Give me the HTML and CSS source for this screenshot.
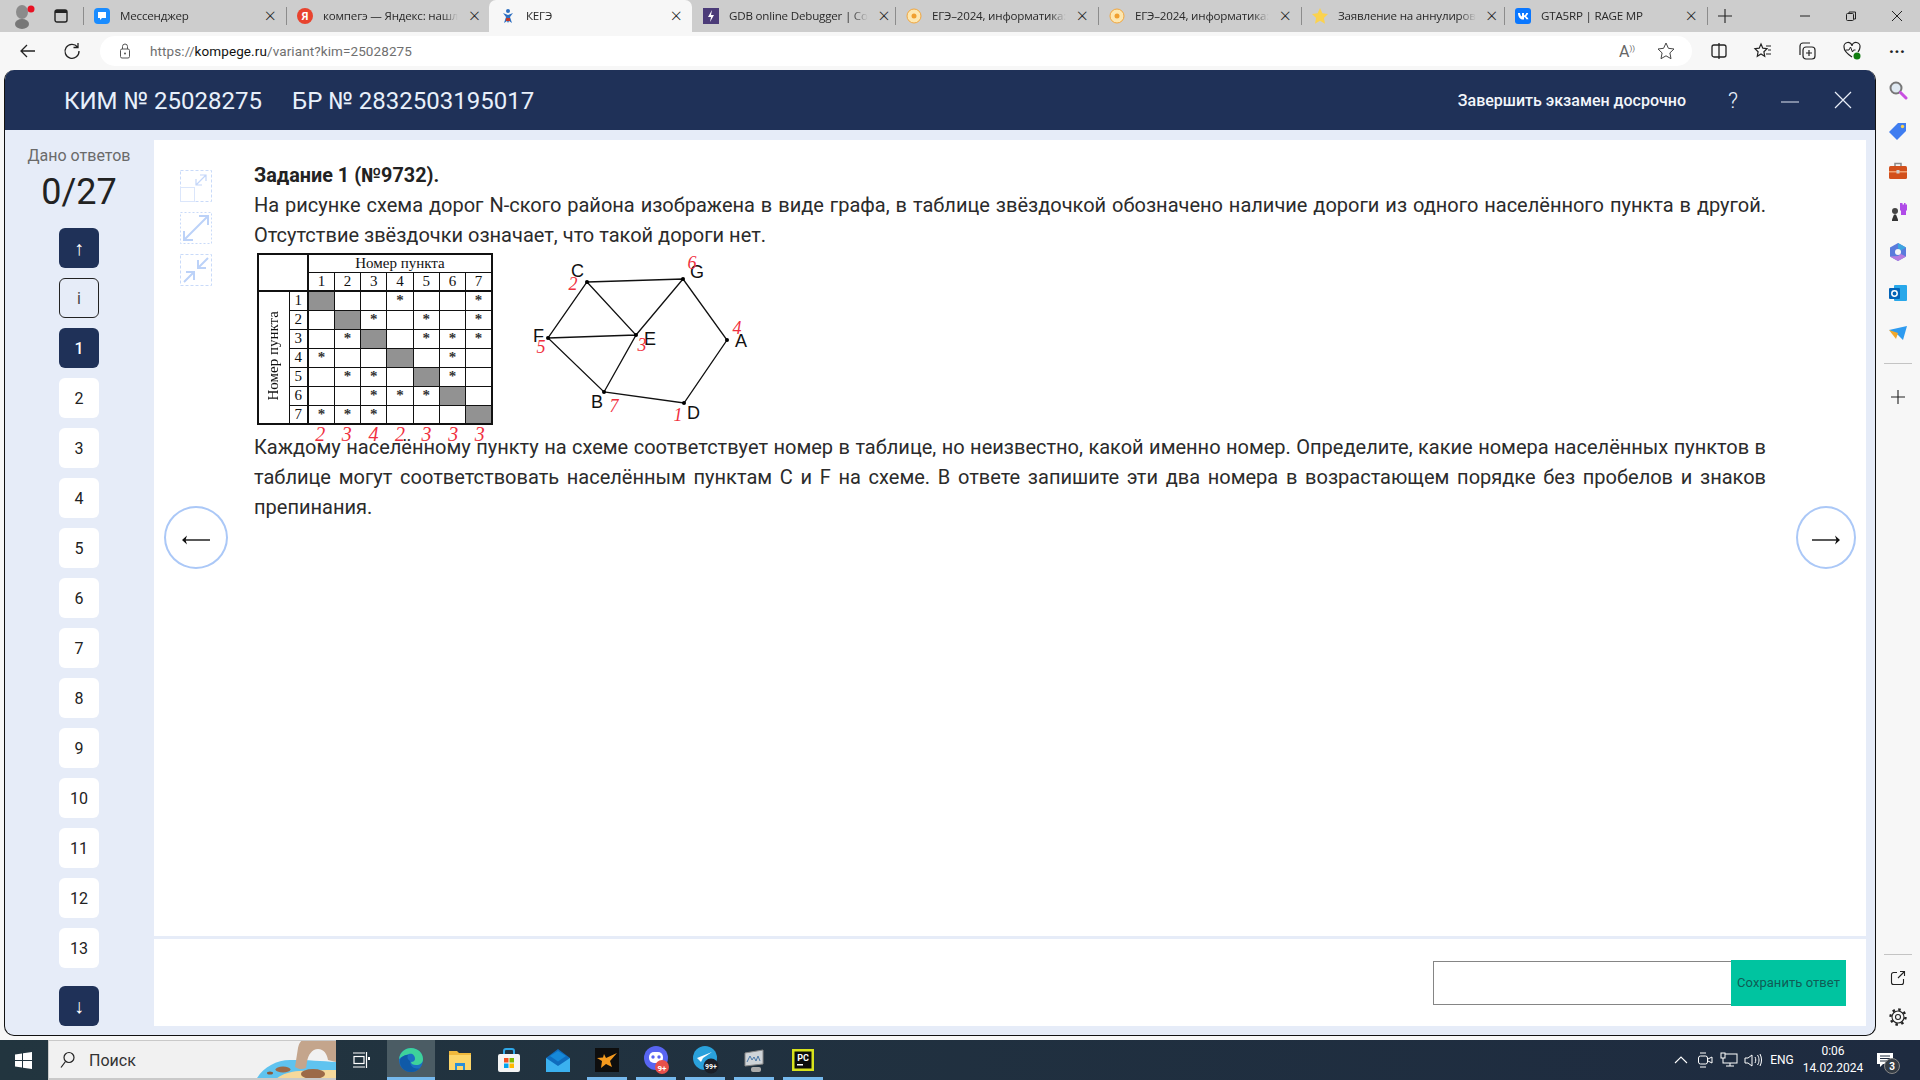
FILE: index.html
```html
<!DOCTYPE html>
<html lang="ru">
<head>
<meta charset="utf-8">
<title>КЕГЭ</title>
<link rel="stylesheet" href="styles.css">
</head>
<body>
<div class="tabbar">
  <div class="tb-left">
    <svg width="24" height="26" viewBox="0 0 24 26"><ellipse cx="10" cy="9" rx="6" ry="7" fill="#8b8b8b"/><ellipse cx="10" cy="21" rx="7" ry="5" fill="#777"/><circle cx="19" cy="6" r="3.500" fill="#e81123"/></svg>
    <svg class="ws" width="14" height="14" viewBox="0 0 14 14"><rect x="1" y="1" width="12" height="12" rx="2" fill="none" stroke="#222" stroke-width="1.400"/><rect x="1" y="1" width="12" height="3" fill="#222"/></svg>
  </div>
  <div class="tab sep"><svg class="fav" viewBox="0 0 16 16"><rect width="16" height="16" rx="4" fill="#1a8cff"/><path d="M4 4h8v6H8l-2 2v-2H4z" fill="#fff"/></svg><span class="tt">Мессенджер</span><span class="tx">×</span></div>
  <div class="tab sep"><svg class="fav" viewBox="0 0 16 16"><circle cx="8" cy="8" r="8" fill="#e8432e"/><text x="8" y="12" class="favt">Я</text></svg><span class="tt">компегэ — Яндекс: нашл</span><span class="tx">×</span></div>
  <div class="tab active"><svg class="fav" viewBox="0 0 16 16"><circle cx="8" cy="3" r="2" fill="#2d6fc0"/><path d="M3 5l5 2 5-2-3 4 2 6-3-2-1 2-1-2-3 2 2-6z" fill="#2d6fc0"/><path d="M6 10h4v3H6z" fill="#c0392b"/></svg><span class="tt">КЕГЭ</span><span class="tx">×</span></div>
  <div class="tab"><svg class="fav" viewBox="0 0 16 16"><rect width="16" height="16" fill="#4b3b78"/><path d="M9 2L5 9h3l-1 5 4-7H8z" fill="#fff"/></svg><span class="tt">GDB online Debugger | Co</span><span class="tx">×</span></div>
  <div class="tab sep"><svg class="fav" viewBox="0 0 16 16"><circle cx="8" cy="8" r="7" fill="#fde7b0" stroke="#f0a640"/><circle cx="8" cy="8" r="2.500" fill="#f0a030"/></svg><span class="tt">ЕГЭ–2024, информатика:</span><span class="tx">×</span></div>
  <div class="tab sep"><svg class="fav" viewBox="0 0 16 16"><circle cx="8" cy="8" r="7" fill="#fde7b0" stroke="#f0a640"/><circle cx="8" cy="8" r="2.500" fill="#f0a030"/></svg><span class="tt">ЕГЭ–2024, информатика:</span><span class="tx">×</span></div>
  <div class="tab sep"><svg class="fav" viewBox="0 0 16 16"><path d="M8 0l2.400 5.300 5.600.7-4.100 3.900 1.100 5.800L8 12.800l-5 2.900 1.100-5.800L0 6l5.600-.7z" fill="#fbd24e"/></svg><span class="tt">Заявление на аннулиров</span><span class="tx">×</span></div>
  <div class="tab sep"><svg class="fav" viewBox="0 0 16 16"><rect width="16" height="16" rx="3" fill="#0a77ff"/><path d="M3 5h2c.2 2 1 3.200 2 3.500V5h2v2.500c1-.2 1.800-1.200 2.200-2.500h2c-.3 1.600-1.300 2.700-2.200 3.300 1 .5 2 1.500 2.500 3h-2.200c-.4-1.200-1.300-2-2.300-2.200V11.500H8C5 11.500 3.200 9 3 5z" fill="#fff"/></svg><span class="tt">GTA5RP | RAGE MP</span><span class="tx">×</span></div>
  <div class="plus sep"><svg width="16" height="16" viewBox="0 0 16 16"><path d="M8 1v14M1 8h14" stroke="#222" stroke-width="1.100"/></svg></div>
  <div class="winctl">
    <svg width="12" height="12" viewBox="0 0 12 12"><path d="M1 6h10" stroke="#222"/></svg>
    <svg width="12" height="12" viewBox="0 0 12 12"><rect x="1.500" y="3.500" width="7" height="7" rx="1" fill="none" stroke="#222"/><path d="M4 3V2h6.500v7H9" fill="none" stroke="#222"/></svg>
    <svg width="12" height="12" viewBox="0 0 12 12"><path d="M1 1l10 10M11 1L1 11" stroke="#222"/></svg>
  </div>
</div>

<div class="addrbar">
  <svg class="nav" width="20" height="20" viewBox="0 0 20 20"><path d="M17 10H3M9 4l-6 6 6 6" fill="none" stroke="#222" stroke-width="1.300"/></svg>
  <svg class="nav" width="20" height="20" viewBox="0 0 20 20"><path d="M15.500 6A7 7 0 1 0 17 10M16 2v4.500h-4.500" fill="none" stroke="#222" stroke-width="1.300"/></svg>
  <div class="urlpill">
    <svg width="14" height="16" viewBox="0 0 14 16"><rect x="2.500" y="6" width="9" height="9" rx="1.500" fill="none" stroke="#555"/><path d="M4.500 6V3.500a2.500 2.500 0 0 1 5 0V6" fill="none" stroke="#555"/><circle cx="7" cy="10.500" r="1" fill="#555"/></svg>
    <span class="url">https://<b>kompege.ru</b>/variant?kim=25028275</span>
    <span class="spacer"></span>
    <span class="aa">A<small>))</small></span>
    <svg width="20" height="20" viewBox="0 0 20 20"><path d="M10 2l2.400 5.300 5.600.7-4.100 3.900 1.100 5.800-5-2.900-5 2.900 1.100-5.800L2 8l5.600-.7z" fill="none" stroke="#444"/></svg>
  </div>
  <div class="addr-tools">
    <svg width="18" height="18" viewBox="0 0 18 18"><rect x="2" y="3" width="14" height="12" rx="2" fill="none" stroke="#222" stroke-width="1.300"/><path d="M9 1v16" stroke="#222" stroke-width="1.300"/></svg>
    <svg width="20" height="20" viewBox="0 0 20 20"><path d="M8 3l1.800 4.200 4.200.5-3.100 3 .8 4.500L8 13l-3.700 2.200.8-4.500L2 7.700l4.200-.5z" fill="none" stroke="#222" stroke-width="1.200"/><path d="M13 5h5M15 9h3M13 13h5" stroke="#222" stroke-width="1.200"/></svg>
    <svg width="20" height="20" viewBox="0 0 20 20"><rect x="6" y="6" width="12" height="12" rx="3" fill="none" stroke="#222" stroke-width="1.200"/><path d="M12 9v6M9 12h6M3 14V5a3 3 0 0 1 3-3h7" fill="none" stroke="#222" stroke-width="1.200"/></svg>
    <svg width="20" height="20" viewBox="0 0 20 20"><path d="M10 16C4 12 2 9 2 6a4 4 0 0 1 8-1 4 4 0 0 1 8 1c0 1.500-.5 3-2 5" fill="none" stroke="#222" stroke-width="1.200"/><path d="M4 9h3l1.500-3 2 5 1-2h2" fill="none" stroke="#222"/><circle cx="15" cy="15" r="3.500" fill="#107c10"/></svg>
    <span class="dots">···</span>
  </div>
</div>

<div class="middle">
  <div class="app">
    <header class="apphead">
      <div class="ids"><span>КИМ № 25028275</span><span>БР № 2832503195017</span></div>
      <div class="headright">
        <span class="finish">Завершить экзамен досрочно</span>
        <span class="hq">?</span>
        <svg width="18" height="18" viewBox="0 0 18 18"><path d="M0 11h18" stroke="#dfe6f2" stroke-width="1.200"/></svg>
        <svg width="18" height="18" viewBox="0 0 18 18"><path d="M1 1l16 16M17 1L1 17" stroke="#e8eef8" stroke-width="1.200"/></svg>
      </div>
    </header>
    <div class="appbody">
      <aside class="side">
        <div class="given">Дано ответов</div>
        <div class="count">0/27</div>
        <nav class="nums">
          <div class="nb dark arrow">↑</div>
          <div class="nb outline">i</div>
          <div class="nb dark">1</div>
          <div class="nb">2</div>
          <div class="nb">3</div>
          <div class="nb">4</div>
          <div class="nb">5</div>
          <div class="nb">6</div>
          <div class="nb">7</div>
          <div class="nb">8</div>
          <div class="nb">9</div>
          <div class="nb">10</div>
          <div class="nb">11</div>
          <div class="nb">12</div>
          <div class="nb">13</div>
          <div class="nb dark arrow down">↓</div>
        </nav>
      </aside>
      <main class="mainarea">
        <section class="task">
          <div class="tools">
            <div class="toolbtn"><svg width="32" height="32" viewBox="0 0 32 32"><rect x=".5" y=".5" width="31" height="31" fill="none" stroke="#c9daf9" stroke-dasharray="3 2"/><rect x=".5" y="17.500" width="14" height="14" fill="none" stroke="#dbe6fb"/><path d="M16 15L26 5M20 5h6v6M16 9v6h6" fill="none" stroke="#c3d6f9" stroke-width="1.200"/></svg></div>
            <div class="toolbtn"><svg width="32" height="32" viewBox="0 0 32 32"><rect x=".5" y=".5" width="31" height="31" fill="none" stroke="#c9daf9" stroke-dasharray="2 2"/><path d="M5 27L27 5M19 4h9v9M4 19v9h9" fill="none" stroke="#bcd2f8" stroke-width="2"/></svg></div>
            <div class="toolbtn"><svg width="32" height="32" viewBox="0 0 32 32"><rect x=".5" y=".5" width="31" height="31" fill="none" stroke="#c9daf9" stroke-dasharray="3 2"/><path d="M28 4L18 14M18 6v8h8M4 28l10-10M14 26v-8H6" fill="none" stroke="#bcd2f8" stroke-width="2"/></svg></div>
          </div>
          <div class="tasktext">
            <div class="title">Задание 1 (№9732).</div>
            <p class="para">На рисунке схема дорог N-ского района изображена в виде графа, в таблице звёздочкой обозначено наличие дороги из одного населённого пункта в другой. Отсутствие звёздочки означает, что такой дороги нет.</p>
            <div class="figure">
              <div class="tablewrap">
                <table class="roads">
                  <colgroup><col class="c1"><col class="c2"><col><col><col><col><col><col><col></colgroup>
                  <tr class="r1"><td class="corner" colspan="2" rowspan="2"></td><td class="th" colspan="7">Номер пункта</td></tr>
                  <tr class="r2"><td>1</td><td>2</td><td>3</td><td>4</td><td>5</td><td>6</td><td>7</td></tr>
                  <tr><td class="vert" rowspan="7"><span>Номер пункта</span></td><td class="rn">1</td><td class="g"></td><td></td><td></td><td class="s">*</td><td></td><td></td><td class="s">*</td></tr>
                  <tr><td class="rn">2</td><td></td><td class="g"></td><td class="s">*</td><td></td><td class="s">*</td><td></td><td class="s">*</td></tr>
                  <tr><td class="rn">3</td><td></td><td class="s">*</td><td class="g"></td><td></td><td class="s">*</td><td class="s">*</td><td class="s">*</td></tr>
                  <tr><td class="rn">4</td><td class="s">*</td><td></td><td></td><td class="g"></td><td></td><td class="s">*</td><td></td></tr>
                  <tr><td class="rn">5</td><td></td><td class="s">*</td><td class="s">*</td><td></td><td class="g"></td><td class="s">*</td><td></td></tr>
                  <tr><td class="rn">6</td><td></td><td></td><td class="s">*</td><td class="s">*</td><td class="s">*</td><td class="g"></td><td></td></tr>
                  <tr><td class="rn">7</td><td class="s">*</td><td class="s">*</td><td class="s">*</td><td></td><td></td><td></td><td class="g"></td></tr>
                </table>
                <div class="scrib"><span>2</span><span>3</span><span>4</span><span>2</span><span>3</span><span>3</span><span>3</span></div>
              </div>
              <svg class="graph" width="240" height="180" viewBox="0 0 240 180">
                <g stroke="#111" stroke-width="1.300" fill="none" stroke-linecap="round">
                  <path d="M57 29L153 26L197 87L154 150L74 139L18 85Z"/>
                  <path d="M57 29L106 82L74 139M153 26L106 82L18 85"/>
                </g>
                <g fill="#000"><circle cx="57" cy="29" r="2"/><circle cx="153" cy="26" r="2"/><circle cx="197" cy="87" r="2"/><circle cx="154" cy="150" r="2"/><circle cx="74" cy="139" r="2"/><circle cx="18" cy="85" r="2"/><circle cx="106" cy="82" r="2"/></g>
                <g class="gl">
                  <text x="41" y="24">C</text><text x="160" y="25">G</text><text x="205" y="94">A</text><text x="157" y="166">D</text><text x="61" y="155">B</text><text x="3" y="89">F</text><text x="114" y="92">E</text>
                </g>
                <g class="gr">
                  <text x="162" y="16">6</text><text x="43" y="37">2</text><text x="207" y="81">4</text><text x="11" y="100">5</text><text x="112" y="98">3</text><text x="84" y="159">7</text><text x="148" y="168">1</text>
                </g>
              </svg>
            </div>
            <p class="para after">Каждому населённому пункту на схеме соответствует номер в таблице, но неизвестно, какой именно номер. Определите, какие номера населённых пунктов в таблице могут соответствовать населённым пунктам C и F на схеме. В ответе запишите эти два номера в возрастающем порядке без пробелов и знаков препинания.</p>
          </div>
          <div class="circle prev"><svg width="28" height="10" viewBox="0 0 28 10"><path d="M28 5H3" stroke="#222" stroke-width="1.500"/><path d="M0 5l5-4.500L3.500 5 5 9.500z" fill="#111"/></svg></div>
          <div class="circle next"><svg width="28" height="10" viewBox="0 0 28 10"><path d="M0 5h25" stroke="#222" stroke-width="1.500"/><path d="M28 5l-5-4.500L24.500 5 23 9.500z" fill="#111"/></svg></div>
        </section>
        <section class="answer">
          <div class="ansinput"></div>
          <div class="savebtn">Сохранить ответ</div>
        </section>
      </main>
    </div>
  </div>
  <div class="edgeside">
    <svg width="20" height="20" viewBox="0 0 20 20"><circle cx="8" cy="8" r="5.500" fill="#dfe9f2" stroke="#777" stroke-width="2"/><path d="M12.500 12.500L18 18" stroke="#c84fe0" stroke-width="3" stroke-linecap="round"/></svg>
    <svg width="20" height="20" viewBox="0 0 20 20"><path d="M1 11L10 2h8v8l-9 9z" fill="#3f7df0"/><circle cx="14.500" cy="5.500" r="1.700" fill="#fbd24e"/></svg>
    <svg width="20" height="20" viewBox="0 0 20 20"><path d="M7 5V2.500h6V5" fill="none" stroke="#8b8b8b" stroke-width="1.500"/><rect x="1" y="5" width="18" height="13" rx="1.500" fill="#d2501c"/><rect x="1" y="10" width="18" height="1.500" fill="#f2a070"/><rect x="8.500" y="9" width="3" height="3.500" fill="#cfcfcf"/></svg>
    <svg width="20" height="20" viewBox="0 0 20 20"><path d="M13 1h1.500v1.500H16V1h1.500v1.500H19V1v7l-1 1v4h-5V9l-1-1V1z" fill="#b04be8"/><circle cx="7" cy="9" r="3" fill="#444"/><path d="M4 19v-1.500l2-5h2l2 5V19z" fill="#333"/></svg>
    <svg width="20" height="20" viewBox="0 0 20 20"><path d="M10 1l8 4.500v9L10 19l-8-4.500v-9z" fill="#5a7bdc"/><path d="M10 1l8 4.500-5 3-3-2z" fill="#3da5e0"/><path d="M2 14.500l8 4.500 8-4.500-5-2.500-3 2z" fill="#b67ce0"/><circle cx="10" cy="10" r="3" fill="#f7f7f7"/></svg>
    <svg width="20" height="20" viewBox="0 0 20 20"><rect x="6" y="2" width="13" height="16" rx="1" fill="#28a8ea"/><rect x="1" y="5" width="11" height="11" rx="1" fill="#0364b8"/><circle cx="6.500" cy="10.500" r="2.700" fill="none" stroke="#fff" stroke-width="1.500"/></svg>
    <svg width="20" height="20" viewBox="0 0 20 20"><path d="M1 6l18-4-4 14-5-5z" fill="#2e9bf0"/><path d="M1 6l9 3-2 6z" fill="#f3a92c"/></svg>
    <div class="eline"></div>
    <svg width="16" height="16" viewBox="0 0 16 16"><path d="M8 1v14M1 8h14" stroke="#222" stroke-width="1.100"/></svg>
    <span class="spacer"></span>
    <div class="eline low"></div>
    <svg width="16" height="16" viewBox="0 0 16 16"><path d="M7 2.500H3.500a2 2 0 0 0-2 2v8a2 2 0 0 0 2 2h8a2 2 0 0 0 2-2V9M8 8l6.500-6.500M10 1.500h4.500V6" fill="none" stroke="#222" stroke-width="1.100"/></svg>
    <svg class="gear" width="18" height="18" viewBox="0 0 18 18"><circle cx="9" cy="9" r="2.500" fill="none" stroke="#222" stroke-width="1.100"/><circle cx="9" cy="9" r="6" fill="none" stroke="#222" stroke-width="1.100"/><circle cx="9" cy="9" r="7.500" fill="none" stroke="#222" stroke-width="2.400" stroke-dasharray="2.500 3.390"/></svg>
  </div>
</div>

<footer class="taskbar">
  <svg class="winlogo" width="17" height="17" viewBox="0 0 17 17"><path d="M0 2.500l7-1v6.500H0zM8 1.300L17 0v8H8zM0 9h7v6.500l-7-1zM8 9h9v8l-9-1.300z" fill="#fff"/></svg>
  <div class="search">
    <svg width="16" height="18" viewBox="0 0 16 18"><circle cx="10" cy="6.500" r="5" fill="none" stroke="#222" stroke-width="1.200"/><path d="M6.500 10.500L2 16.500" stroke="#222" stroke-width="1.200"/></svg>
    <span class="stext">Поиск</span>
    <svg class="art" width="88" height="40" viewBox="0 0 88 40"><path d="M8 40c6-12 20-20 34-20 18 0 32 1 46 2v18z" fill="#5fc3ef"/><path d="M27 40c6-6 14-8 24-9 14-1 26-1 37-1v10z" fill="#f5d99c"/><path d="M47 27L50 8C51 3 53 0 56 0H88V22L80 20C79 14 76 9 70 9 64 9 60 15 59 22L58 28C54 30 50 29 47 27Z" fill="#c4a58c"/><ellipse cx="22" cy="33" rx="3" ry="1.500" fill="#8a5a3c"/><ellipse cx="35" cy="29.500" rx="7.500" ry="3" fill="#9c6a48"/><ellipse cx="65" cy="34" rx="12" ry="5" fill="#9c6a48"/></svg>
  </div>
  <svg class="taskview" width="18" height="18" viewBox="0 0 18 18"><rect x="2" y="5.500" width="10" height="7" fill="none" stroke="#fff" stroke-width="1.200"/><path d="M1 2h12M1 16h12M14.500 1v16" stroke="#fff" stroke-width="1.200"/><rect x="16" y="6" width="2" height="3" fill="#fff"/></svg>
  <div class="tbi on"><svg width="24" height="24" viewBox="0 0 24 24"><circle cx="12" cy="12" r="12" fill="#1b6fc2"/><path d="M0 11C1 4 6 0 12 0c7 0 12 5 12 11 0 4-3 6-7 6-3 0-5-1-5-3 2 0 4-1 4-3 0-4-3-6-6-5-4 1-8 3-10 5z" fill="#3ed29b"/><path d="M11 13c0 5 4 9 10 7-2 2-5 4-9 4-7 0-12-6-11-12 1-3 4-5 8-5-1 2-1 4 2 6z" fill="#0f5aa8"/></svg></div>
  <div class="tbi"><svg width="22" height="20" viewBox="0 0 22 20"><path d="M0 1h8l2 2h12v17H0z" fill="#f0b93c"/><rect y="5" width="22" height="15" fill="#fcd66a"/><path d="M6 13h10v7h-2v-4H8v4H6z" fill="#2a8fd8"/></svg></div>
  <div class="tbi"><svg width="24" height="24" viewBox="0 0 24 24"><path d="M7 7V3a2 2 0 0 1 2-2h6a2 2 0 0 1 2 2v4" fill="none" stroke="#2fa8e8" stroke-width="2"/><rect x="1" y="6" width="22" height="18" rx="2" fill="#f4f4f4"/><rect x="7" y="10" width="4.500" height="4.500" fill="#f25022"/><rect x="12.500" y="10" width="4.500" height="4.500" fill="#7fba00"/><rect x="7" y="15.500" width="4.500" height="4.500" fill="#00a4ef"/><rect x="12.500" y="15.500" width="4.500" height="4.500" fill="#ffb900"/></svg></div>
  <div class="tbi"><svg width="24" height="23" viewBox="0 0 24 23"><path d="M0 9L12 0l12 9v14H0z" fill="#0f6cbd"/><path d="M0 9l12 8 12-8v14H0z" fill="#3bb1ef"/><path d="M4 7l8-5 8 5-8 5.500z" fill="#1689d8"/></svg></div>
  <div class="tbi"><svg width="24" height="24" viewBox="0 0 24 24"><rect width="24" height="24" fill="#0e0e0e"/><path d="M9 6l2 4 11-5-7 8 2 6-6-3-5 4 1-7-5-3 6-.5z" fill="#f59a1e"/></svg></div>
  <div class="tbi"><svg width="32" height="36" viewBox="0 0 32 36"><circle cx="16" cy="16" r="12" fill="#5865f2"/><rect x="9" y="10" width="14" height="11" rx="5" fill="#fff"/><circle cx="13" cy="15" r="1.700" fill="#5865f2"/><circle cx="19" cy="15" r="1.700" fill="#5865f2"/><circle cx="22" cy="25" r="7" fill="#e8504a"/><text x="22" y="28.500" class="badge">9+</text></svg></div>
  <div class="tbi"><svg width="32" height="36" viewBox="0 0 32 36"><circle cx="16" cy="16" r="12" fill="#2aa1db"/><path d="M8 16l15-6-9 6-2 4z" fill="#fff"/><circle cx="22" cy="24" r="7.500" fill="#1b1f28"/><text x="22" y="27" class="badge small">99+</text></svg></div>
  <div class="tbi"><svg width="22" height="24" viewBox="0 0 22 24"><path d="M2 5l18-3v14L2 18z" fill="#cfd4d8" stroke="#888"/><path d="M4 14l3-6 2 4 2-3 2 4 2-5 2 5" fill="none" stroke="#4a78a8"/><rect x="8" y="19" width="10" height="5" rx="2" fill="#aaa"/></svg></div>
  <div class="tbi"><svg width="22" height="22" viewBox="0 0 22 22"><rect width="22" height="22" fill="#d8e21c"/><rect x="2.500" y="2.500" width="17" height="17" fill="#0c0c0c"/><text x="11" y="11.500" class="pc">PC</text><rect x="5" y="15" width="6" height="1.500" fill="#fff"/></svg></div>
  <div class="underlines"><i></i><i></i><i></i><i></i><i></i></div>
  <span class="spacer"></span>
  <div class="tray">
    <svg class="t1" width="14" height="14" viewBox="0 0 14 14"><path d="M1 10l6-6 6 6" fill="none" stroke="#fff" stroke-width="1.100"/></svg>
    <svg class="t2" width="16" height="18" viewBox="0 0 16 18"><rect x="1.500" y="5" width="9" height="8" rx="2" fill="none" stroke="#fff"/><path d="M11 8l4-2v6l-4-2M3 2h6M3 16h6" fill="none" stroke="#fff"/></svg>
    <svg class="t3" width="18" height="16" viewBox="0 0 18 16"><rect x="3" y="2" width="14" height="9" fill="none" stroke="#fff"/><rect x="1" y="1" width="4" height="5" fill="#1f2c3f" stroke="#fff"/><path d="M10 11v3M6 14h8" stroke="#fff"/></svg>
    <svg class="t4" width="18" height="16" viewBox="0 0 18 16"><path d="M1 6h3l4-3v11l-4-3H1zM11 5c1 1.800 1 4.200 0 6M13.500 3c2 3 2 7 0 10M16 2c2 4 2 8 0 12" fill="none" stroke="#fff"/></svg>
    <span class="eng">ENG</span>
    <div class="clock"><span>0:06</span><span>14.02.2024</span></div>
    <div class="notif"><svg width="16" height="15" viewBox="0 0 16 15"><path d="M0 0h16v11H6l-3 3v-3H0z" fill="#fff"/><path d="M3 3h10M3 5.500h10M3 8h7" stroke="#1f2c3f"/></svg><span class="nbadge">3</span></div>
  </div>
</footer>
</body>
</html>
```

FILE: styles.css
```css
* { box-sizing: border-box; }
html, body { margin: 0; padding: 0; }
body {
  width: 1920px; height: 1080px; overflow: hidden;
  display: flex; flex-direction: column;
  font-family: Roboto, "Liberation Sans", sans-serif;
  background: #f7f7f7; color: #222;
}
.spacer { flex: 1; }

/* Browser tab strip */
.tabbar { height: 32px; background: #cdcdcd; display: flex; align-items: stretch; font-family: "Open Sans", Roboto, sans-serif; font-size: 11.600px; color: #2a2a2a; flex: none; }
.tb-left { width: 83px; display: flex; align-items: center; padding-left: 12px; gap: 18px; }
.tab { width: 203px; display: flex; align-items: center; padding: 0 10px 1px 11px; gap: 10px; position: relative; letter-spacing: -0.2px; }
.tab.sep::before, .plus.sep::before { content: ""; position: absolute; left: 0; top: 7px; height: 18px; width: 1px; background: #8c8c8c; }
.tab.active { background: #f7f7f7; border-radius: 7px 7px 0 0; }
.fav { width: 16px; height: 16px; flex: none; }
.favt { font: bold 11px Roboto, sans-serif; fill: #fff; text-anchor: middle; }
.tt { flex: 1; white-space: nowrap; -webkit-mask-image: linear-gradient(90deg, #000 88%, transparent); mask-image: linear-gradient(90deg, #000 88%, transparent); }
.tx { font-size: 20px; line-height: 1; color: #222; flex: none; width: 12px; text-align: center; font-weight: 300; }
.plus { width: 36px; position: relative; display: flex; align-items: center; justify-content: center; }
.winctl { flex: 1; display: flex; align-items: center; justify-content: flex-end; gap: 34px; padding-right: 17px; }

/* Address bar */
.addrbar { height: 38px; flex: none; background: #f7f7f7; display: flex; align-items: center; padding-left: 18px; }
.nav { margin-right: 24px; flex: none; }
.nav + .nav { margin-right: 18px; }
.urlpill { width: 1592px; height: 30px; background: #fff; border-radius: 15px; display: flex; align-items: center; padding: 0 16px 0 18px; flex: none; }
.url { font-size: 13.500px; color: #6f6f6f; letter-spacing: .1px; margin-left: 18px; }
.url b { font-weight: 400; color: #111; }
.aa { font-size: 16px; color: #666; margin-right: 21px; }
.aa small { font-size: 8px; vertical-align: super; }
.addr-tools { flex: 1; display: flex; align-items: center; justify-content: space-between; padding: 0 12px 0 18px; }
.dots { font-size: 18px; font-weight: 700; width: 22px; text-align: center; }

/* Main window */
.middle { flex: none; height: 970px; display: flex; align-items: stretch; }
.app { width: 1872px; margin-left: 4px; height: 966px; border-radius: 10px; overflow: hidden; background: #e6ecf8; border-right: 1px solid #111; border-left: 1px solid #111; border-bottom: 1px solid #111; display: flex; flex-direction: column; flex: none; }
.apphead { height: 60px; flex: none; background: #1f3158; color: #e8f0fb; display: flex; align-items: center; justify-content: space-between; padding: 2px 23px 0 59px; }
.ids { display: flex; gap: 30px; font-size: 24px; }
.headright { display: flex; align-items: center; margin-top: -2px; }
.finish { font-size: 16px; font-weight: 500; color: #f3f6fb; margin-right: 41px; }
.hq { font-size: 22px; font-weight: 300; margin-right: 42px; width: 12px; text-align: center; }
.headright svg + svg { margin-left: 35px; }
.appbody { flex: 1; display: flex; min-height: 0; padding: 10px 9px 9px 0; }
.side { width: 148px; margin-right: 1px; flex: none; margin-top: -10px; display: flex; flex-direction: column; align-items: center; padding-top: 16px; }
.given { font-size: 16px; color: #6a6a6a; line-height: 20px; }
.count { font-size: 36px; color: #222; line-height: 44px; margin-top: 4px; margin-bottom: 14px; }
.nums { display: flex; flex-direction: column; gap: 10px; }
.nb { width: 40px; height: 40px; border-radius: 6px; background: #fff; display: flex; align-items: center; justify-content: center; font-size: 16px; color: #222; }
.nb.dark { background: #1f3158; color: #fff; font-weight: 500; }
.nb.arrow { font-size: 20px; }
.nb.outline { background: transparent; border: 1px solid #222; color: #444; }
.nb.down { margin-top: 8px; }
.mainarea { flex: 1; display: flex; flex-direction: column; gap: 3px; min-width: 0; }
.task { flex: 1; background: #fff; display: flex; padding: 30px 0 0 26px; position: relative; }
.tools { width: 32px; flex: none; display: flex; flex-direction: column; gap: 10px; }
.toolbtn { width: 32px; height: 32px; display: flex; }
.tasktext { width: 1512px; margin-left: 42px; font-size: 20px; line-height: 30px; color: #2b2b2b; }
.title { font-weight: 700; font-size: 19.800px; margin-top: -9px; height: 29px; color: #222; }
.para { margin: 0; text-align: justify; }
.after { margin-top: -1px; }
.figure { display: flex; align-items: flex-start; height: 180px; padding: 0 0 0 3px; margin-top: 3px; gap: 37px; }
.tablewrap { position: relative; width: 236px; flex: none; }
.roads { border-collapse: collapse; table-layout: fixed; width: 236px; height: 170px; font-family: "Liberation Serif", serif; font-size: 15px; color: #111; line-height: 1; border: 2px solid #111; }
.c1 { width: 31px; }
.c2 { width: 19px; }
.roads td { border: 1px solid #111; padding: 0; text-align: center; height: 19px; }
.r1 td { height: 18px; }
.roads .th { font-size: 15px; }
.roads .corner { border-bottom-width: 2px; border-right-width: 2px; }
.roads .r2 td { border-bottom-width: 2px; }
.roads .rn { border-right-width: 2px; }
.vert span { display: inline-block; writing-mode: vertical-rl; transform: rotate(180deg); font-size: 15px; white-space: nowrap; }
.roads .g { background: #929292; }
.roads .s { font-size: 15px; font-weight: 700; line-height: 15px; color: #333; }
.scrib { position: absolute; left: 50px; top: 171px; width: 186px; display: grid; grid-template-columns: repeat(7, 1fr); text-align: center; font: italic 20px/20px "Liberation Serif", serif; color: #f03040; }
.graph { flex: none; overflow: visible; }
.gl text { font: 18px "Liberation Sans", sans-serif; fill: #111; }
.gr text { font: italic 18px "Liberation Serif", serif; fill: #f03040; text-anchor: middle; }
.circle { position: absolute; top: 366px; height: 63px; display: flex; align-items: center; justify-content: center; padding-top: 5px; border: 2px solid #abc8f7; border-radius: 50%; background: #fff; }
.circle.prev { left: 10px; width: 64px; }
.circle.next { right: 10px; width: 60px; }
.answer { height: 87px; flex: none; background: #fff; display: flex; align-items: center; justify-content: flex-end; padding: 0 20px 0 0; }
.ansinput { width: 298px; height: 44px; border: 1.500px solid #858585; border-right: 0; background: #fff; }
.savebtn { width: 115px; height: 46px; background: #00c4a0; color: #0f5d56; font-size: 13px; display: flex; align-items: center; justify-content: center; letter-spacing: .05px; }

/* Edge side rail */
.edgeside { flex: 1; display: flex; flex-direction: column; align-items: center; padding: 10px 0 14px; gap: 20.600px; }
.eline { width: 28px; height: 1px; background: #c4c4c4; flex: none; margin: -1px 0 4px; }
.eline.low { margin: 0 0 -5px; }
.edgeside .spacer { margin: -20px 0; }
.gear { margin-top: 1px; }

/* Windows taskbar */
.taskbar { height: 40px; flex: none; background: linear-gradient(90deg, #22353f, #1e2b40); display: flex; align-items: center; color: #fff; position: relative; }
.winlogo { margin: 0 16px 0 15px; flex: none; }
.search { width: 288px; height: 40px; background: #f1f1f1; border: 1px solid #c9c9c9; border-bottom: 2px solid #c9c9c9; border-right: 0; display: flex; align-items: center; padding-left: 10px; gap: 14px; position: relative; overflow: hidden; color: #222; font-size: 16px; flex: none; }
.stext { color: #333; margin-top: 2px; }
.art { position: absolute; right: 0; top: -1px; }
.taskview { margin: 0 17px 0 16px; flex: none; }
.tbi { width: 49px; height: 40px; display: flex; align-items: center; justify-content: center; flex: none; }
.tbi svg { flex: none; }
.tbi.on { background: #4b5c64; border-bottom: 3px solid #76b9ed; width: 48px; padding-top: 3px; }
.badge { font: bold 8px Roboto, sans-serif; fill: #fff; text-anchor: middle; }
.badge.small { font-size: 7px; }
.pc { font: bold 9px Roboto, sans-serif; fill: #fff; text-anchor: middle; }
.underlines { position: absolute; left: 587px; bottom: 0; display: flex; gap: 9px; }
.underlines i { width: 40px; height: 3px; background: #76b9ed; }
.tray { display: flex; align-items: center; padding-right: 19px; font-size: 12px; }
.t2 { margin-left: 9px; }
.t3 { margin-left: 7px; }
.t4 { margin-left: 6px; }
.eng { margin-left: 8px; width: 24px; text-align: center; font-size: 12px; }
.clock { display: flex; flex-direction: column; align-items: center; line-height: 17px; width: 56px; margin-left: 11px; font-size: 12px; }
.notif { position: relative; width: 24px; height: 30px; display: flex; align-items: center; margin-left: 16px; }
.nbadge { position: absolute; left: 7px; top: 13px; width: 16px; height: 16px; border-radius: 50%; background: #333b44; border: 1px solid #888; font-size: 10px; font-weight: 700; display: flex; align-items: center; justify-content: center; }
```
